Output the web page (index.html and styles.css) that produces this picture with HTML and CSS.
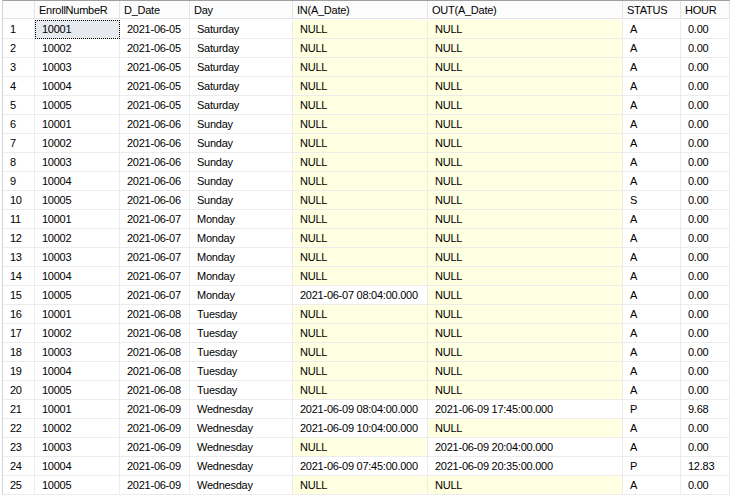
FILE: index.html
```html
<!DOCTYPE html>
<html>
<head>
<meta charset="utf-8">
<link rel="stylesheet" href="styles.css">
</head>
<body>
<div class="grid" id="grid">
  <div class="hd rh"></div>
  <div class="hd">EnrollNumbeR</div>
  <div class="hd">D_Date</div>
  <div class="hd">Day</div>
  <div class="hd">IN(A_Date)</div>
  <div class="hd">OUT(A_Date)</div>
  <div class="hd">STATUS</div>
  <div class="hd">HOUR</div>
</div>
<script src="app.js"></script>
</body>
</html>
```
FILE: app.js
```js
var rows = [
["10001","2021-06-05","Saturday",null,null,"A","0.00"],
["10002","2021-06-05","Saturday",null,null,"A","0.00"],
["10003","2021-06-05","Saturday",null,null,"A","0.00"],
["10004","2021-06-05","Saturday",null,null,"A","0.00"],
["10005","2021-06-05","Saturday",null,null,"A","0.00"],
["10001","2021-06-06","Sunday",null,null,"A","0.00"],
["10002","2021-06-06","Sunday",null,null,"A","0.00"],
["10003","2021-06-06","Sunday",null,null,"A","0.00"],
["10004","2021-06-06","Sunday",null,null,"A","0.00"],
["10005","2021-06-06","Sunday",null,null,"S","0.00"],
["10001","2021-06-07","Monday",null,null,"A","0.00"],
["10002","2021-06-07","Monday",null,null,"A","0.00"],
["10003","2021-06-07","Monday",null,null,"A","0.00"],
["10004","2021-06-07","Monday",null,null,"A","0.00"],
["10005","2021-06-07","Monday","2021-06-07 08:04:00.000",null,"A","0.00"],
["10001","2021-06-08","Tuesday",null,null,"A","0.00"],
["10002","2021-06-08","Tuesday",null,null,"A","0.00"],
["10003","2021-06-08","Tuesday",null,null,"A","0.00"],
["10004","2021-06-08","Tuesday",null,null,"A","0.00"],
["10005","2021-06-08","Tuesday",null,null,"A","0.00"],
["10001","2021-06-09","Wednesday","2021-06-09 08:04:00.000","2021-06-09 17:45:00.000","P","9.68"],
["10002","2021-06-09","Wednesday","2021-06-09 10:04:00.000",null,"A","0.00"],
["10003","2021-06-09","Wednesday",null,"2021-06-09 20:04:00.000","A","0.00"],
["10004","2021-06-09","Wednesday","2021-06-09 07:45:00.000","2021-06-09 20:35:00.000","P","12.83"],
["10005","2021-06-09","Wednesday",null,null,"A","0.00"]
];
var g = document.getElementById("grid");
rows.forEach(function (r, i) {
  var n = document.createElement("div");
  n.className = "c rn";
  n.textContent = String(i + 1);
  g.appendChild(n);
  r.forEach(function (v, j) {
    var d = document.createElement("div");
    d.className = "c";
    if (v === null) { d.className += " nul"; d.textContent = "NULL"; }
    else d.textContent = v;
    if (i === 0 && j === 0) d.className += " sel";
    g.appendChild(d);
  });
});
```
FILE: styles.css
```css
html, body {
  margin: 0;
  padding: 0;
  background: #fff;
}
.grid {
  margin-left: 2px;
  border-left: 1px solid #d4d4d4;
  border-top: 1px solid #a0a0a0;
  display: grid;
  grid-template-columns: 32px 85px 70px 103px 135px 195px 58px 49px;
  grid-auto-rows: 19px;
  width: 727px;
  font-family: "Liberation Sans", Arial, sans-serif;
  font-size: 11px;
  letter-spacing: -0.25px;
  color: #000;
}
.hd {
  box-sizing: border-box;
  height: 18px;
  line-height: 18px;
  padding-left: 4px;
  border-right: 1px solid #e4e4e4;
  border-bottom: 1px solid #e4e4e4;
  background: #fcfcfc;
  white-space: nowrap;
  overflow: hidden;
}
.c {
  box-sizing: border-box;
  line-height: 18px;
  padding-left: 7px;
  border-right: 1px solid #ececec;
  border-bottom: 1px solid #ececec;
  white-space: nowrap;
  overflow: hidden;
  background: #fff;
}
.c.rn {
  padding-left: 7px;
}
.c.nul {
  background: #ffffe1;
}
.c.sel {
  background: #e6eaee;
  outline: 1px dotted #000;
  outline-offset: -1px;
}
```
